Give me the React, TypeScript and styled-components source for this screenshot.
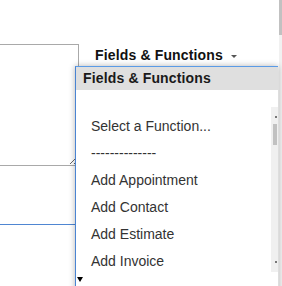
import styled, { createGlobalStyle } from 'styled-components'

const GlobalStyle = createGlobalStyle`
  html, body {
    margin: 0;
    padding: 0;
    background: #fff;
    overflow: hidden;
  }
  body {
    font-family: "Liberation Sans", Arial, sans-serif;
    font-size: 14px;
  }
`

const items = [
  'Select a Function...',
  '--------------',
  'Add Appointment',
  'Add Contact',
  'Add Estimate',
  'Add Invoice',
]

const App = () => {
  return (
    <Page>
      <GlobalStyle />
      <Content>
        <LeftColumn>
          <Notes defaultValue="" />
          <Divider />
        </LeftColumn>
        <RightColumn>
          <MenuButton>
            Fields &amp; Functions
            <Caret />
          </MenuButton>
        </RightColumn>

        <Dropdown>
          <DropdownHeader>Fields &amp; Functions</DropdownHeader>
          <ListBox>
            <Options>
              {items.map((item) => (
                <Option key={item}>{item}</Option>
              ))}
            </Options>
            <ScrollTrack>
              <ScrollArrow />
              <ScrollThumb />
              <ScrollArrow $bottom />
            </ScrollTrack>
          </ListBox>
          <DropdownFooter>
            <MoreArrow />
          </DropdownFooter>
        </Dropdown>
      </Content>
      <PageScroll>
        <PageThumb />
      </PageScroll>
    </Page>
  )
}

const Page = styled.div`
  display: flex;
  width: 282px;
  height: 286px;
  overflow: hidden;
`

const Content = styled.div`
  position: relative;
  flex: 1;
  display: grid;
  grid-template-columns: 79px 1fr;
  align-items: start;
  padding-top: 44px;
`

const LeftColumn = styled.div`
  display: flex;
  flex-direction: column;
`

const Notes = styled.textarea`
  display: block;
  box-sizing: border-box;
  margin: 0 0 0 -20px;
  width: calc(100% + 20px);
  height: 122px;
  border: 1px solid #a9a9a9;
  padding: 2px;
  font-family: "Liberation Sans", Arial, sans-serif;
  outline: none;
`

const Divider = styled.div`
  margin-top: 58px;
  border-top: 1px solid #4f86d2;
`

const RightColumn = styled.div`
  padding: 3px 0 0 16px;
`

const MenuButton = styled.div`
  display: inline-flex;
  align-items: center;
  font-weight: bold;
  font-size: 14px;
  line-height: 16px;
  color: #111;
  letter-spacing: 0.15px;
  white-space: nowrap;
`

const Caret = styled.span`
  width: 0;
  height: 0;
  margin: 2px 0 0 8px;
  border-left: 3px solid transparent;
  border-right: 3px solid transparent;
  border-top: 3px solid #555;
`

const Dropdown = styled.div`
  position: absolute;
  left: 75px;
  top: 66px;
  width: 203px;
  height: 240px;
  box-sizing: border-box;
  background: #fff;
  border: 1px solid #5b9be6;
  border-left-color: #4a84d2;
  border-right: none;
  box-shadow: 0 0 6px rgba(0, 0, 0, 0.3);
  display: flex;
  flex-direction: column;
`

const DropdownHeader = styled.div`
  background: #dfdfdf;
  padding: 3px 7px 4px;
  font-weight: bold;
  font-size: 14px;
  line-height: 16px;
  color: #1a1a1a;
  letter-spacing: 0.15px;
`

const ListBox = styled.div`
  margin-top: 17px;
  height: 165px;
  display: flex;
  overflow: hidden;
`

const Options = styled.div`
  flex: 1;
  padding: 6px 0 0 15px;
  overflow: hidden;
`

const Option = styled.div`
  height: 27px;
  line-height: 27px;
  font-size: 14px;
  color: #333;
  white-space: nowrap;
`

const ScrollTrack = styled.div`
  width: 7px;
  background: #f0f0f0;
  display: flex;
  flex-direction: column;
  padding-top: 9px;
  box-sizing: border-box;
`

const ScrollArrow = styled.div<{ $bottom?: boolean }>`
  width: 2px;
  height: 2px;
  align-self: flex-end;
  margin-right: 1px;
  background: #777;
  margin-top: ${(p) => (p.$bottom ? 'auto' : '0')};
  margin-bottom: ${(p) => (p.$bottom ? '9px' : '0')};
`

const ScrollThumb = styled.div`
  width: 4px;
  height: 21px;
  margin: 6px 0 0 2px;
  background: #c1c1c1;
`

const DropdownFooter = styled.div`
  padding: 5px 0 0 1px;
`

const MoreArrow = styled.div`
  width: 0;
  height: 0;
  border-left: 3px solid transparent;
  border-right: 3px solid transparent;
  border-top: 5px solid #000;
`

const PageScroll = styled.div`
  width: 3px;
  background: #f1f1f1;
`

const PageThumb = styled.div`
  height: 35px;
  background: #c1c1c1;
`

export default App
